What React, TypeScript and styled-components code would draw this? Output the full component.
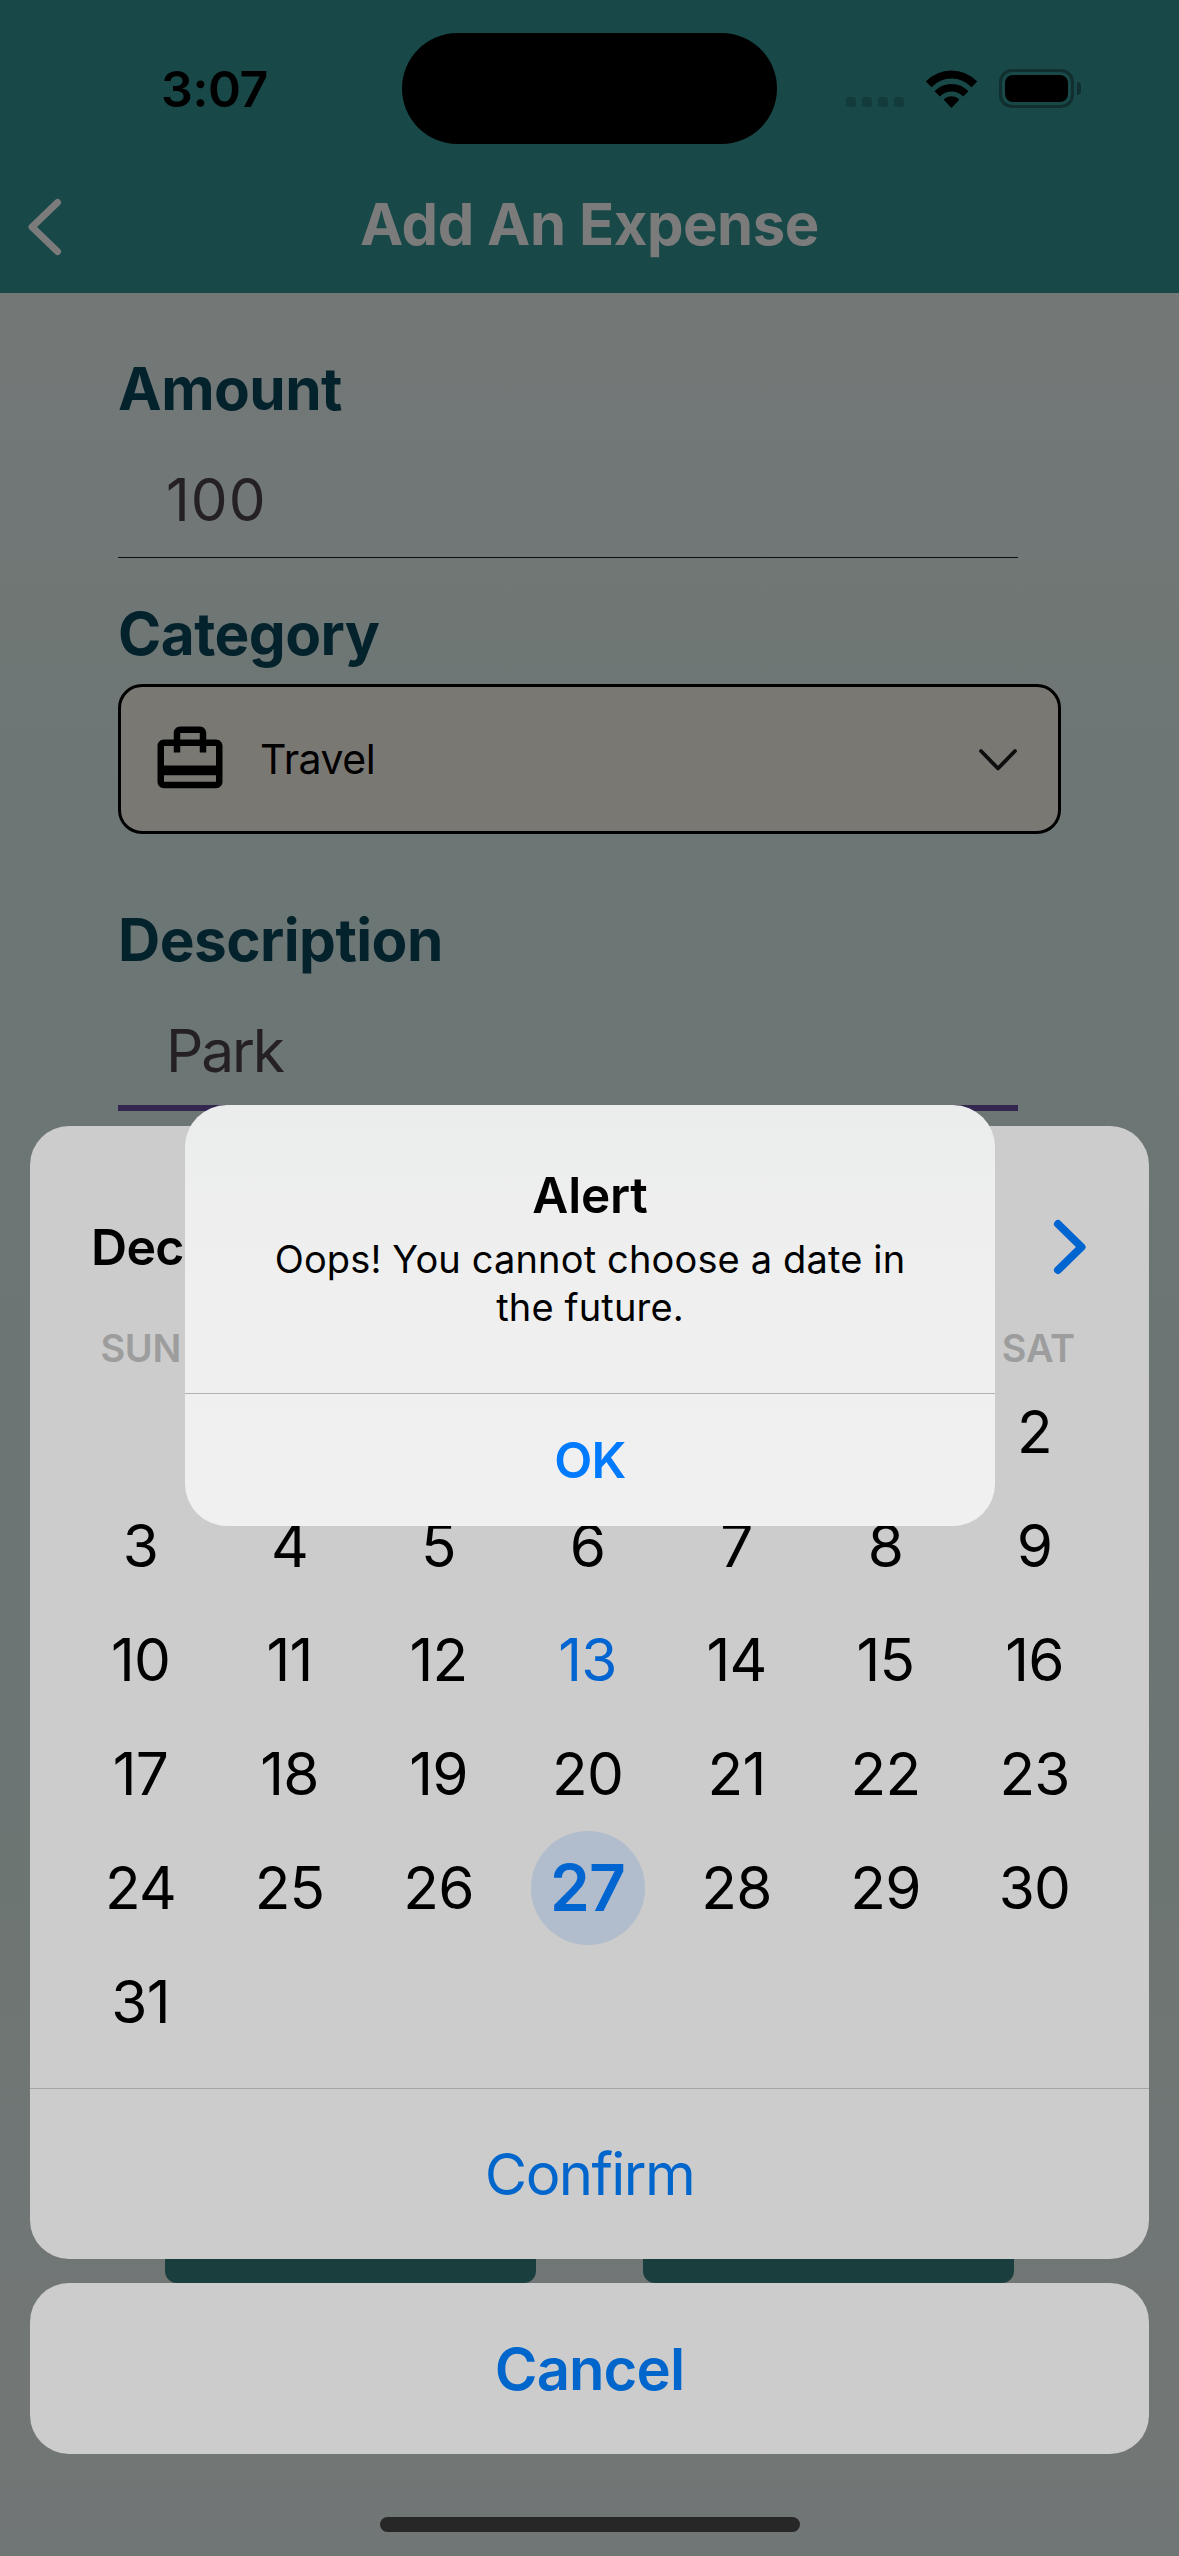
import React from "react";
import styled, { createGlobalStyle } from "styled-components";
import { MdOutlineCardTravel } from "react-icons/md";

const GlobalStyle = createGlobalStyle`
  * { box-sizing: border-box; }
  html, body { margin: 0; padding: 0; }
  body { font-family: Inter, "Liberation Sans", sans-serif; }
  button { font: inherit; border: 0; padding: 0; margin: 0; background: none; }
`;

const Screen = styled.main`
  position: relative;
  display: flex;
  flex-direction: column;
  width: 1179px;
  height: 2556px;
  overflow: hidden;
  background: linear-gradient(#737877 0%, #737877 12%, #6c7674 34%, #6c7573 68%, #727776 94%, #707675 100%);
`;

const Header = styled.header`
  display: flex;
  flex-direction: column;
  height: 293px;
  flex: none;
  background: #184847;
`;

const StatusBar = styled.div`
  display: grid;
  grid-template-columns: 402px 375px 402px;
  align-items: center;
  height: 177px;
`;

const Clock = styled.time`
  padding-left: 161px;
  font-size: 50px;
  font-weight: 600;
  line-height: 60px;
  letter-spacing: -0.4px;
  color: #000;
`;

const Island = styled.div`
  height: 111px;
  border-radius: 56px;
  background: #000;
`;

const StatusIcons = styled.div`
  display: flex;
  align-items: center;
  height: 39px;
  padding-left: 69px;
`;

const Signal = styled.div`
  display: flex;
  align-self: flex-end;
  gap: 6px;
  margin: 0 22px 1px 0;
`;

const SignalDot = styled.span`
  width: 10px;
  height: 10px;
  border-radius: 3.5px;
  background: #143b3b;
`;

const Battery = styled.div`
  display: flex;
  width: 75px;
  height: 39px;
  padding: 3px;
  margin-left: 22px;
  border: 3px solid #112f2f;
  border-radius: 13px;
`;

const BatteryLevel = styled.span`
  flex: 1;
  border-radius: 8px;
  background: #000;
`;

const BatteryTip = styled.span`
  width: 4px;
  height: 13px;
  margin-left: 3px;
  border-radius: 0 4px 4px 0;
  background: #112f2f;
`;

const NavBar = styled.div`
  display: grid;
  grid-template-columns: 120px 1fr 120px;
  align-items: center;
  height: 94px;
`;

const BackButton = styled.button`
  display: flex;
  padding: 6px 0 0 27px;
`;

const Title = styled.h1`
  margin: 0;
  text-align: center;
  font-size: 58px;
  font-weight: 700;
  line-height: 94px;
  letter-spacing: -0.45px;
  color: #7b7b7b;
`;

const Form = styled.section`
  display: flex;
  flex-direction: column;
  height: 1990px;
  padding: 60px 118px 0;
`;

const Label = styled.h2<{ $gap: number }>`
  margin: ${(p) => p.$gap}px 0 0;
  font-size: 58.5px;
  font-weight: 700;
  line-height: 71px;
  letter-spacing: -0.55px;
  color: #04222c;
`;

const Field = styled.div<{ $focused?: boolean; $numeric?: boolean }>`
  width: 900px;
  height: ${(p) => (p.$focused ? 136 : 134)}px;
  padding: 36px 0 0 48px;
  border-bottom: ${(p) => (p.$focused ? "6px solid #33264f" : "1px solid #0d0e10")};
  font-size: 58.5px;
  line-height: 79px;
  letter-spacing: ${(p) => (p.$numeric ? 1 : -2.1)}px;
  color: #242024;
`;

const Select = styled.div`
  display: flex;
  align-items: center;
  width: 943px;
  height: 150px;
  margin-top: 15px;
  padding: 0 39px 0 30px;
  border: 3px solid #000;
  border-radius: 24px;
  background: #7a7873;
  color: #000;
`;

const SelectText = styled.span`
  flex: 1;
  padding-left: 31px;
  font-size: 41px;
  letter-spacing: -0.5px;
`;

const Actions = styled.div`
  display: flex;
  justify-content: space-between;
  margin-top: auto;
  padding: 0 47px;
`;

const ActionButton = styled.button`
  width: 371px;
  height: 120px;
  border-radius: 12px;
  background: #1a3e3e;
`;

const SheetLayer = styled.div`
  position: absolute;
  inset: 0;
  display: flex;
  flex-direction: column;
  justify-content: flex-end;
  gap: 24px;
  padding: 0 30px 102px;
`;

const Sheet = styled.section`
  display: flex;
  flex-direction: column;
  height: 1133px;
  border-radius: 39px;
  background: #ccc;
`;

const MonthBar = styled.div`
  display: flex;
  align-items: center;
  justify-content: space-between;
  height: 80px;
  margin-top: 81px;
  padding: 0 60px 0 61px;
`;

const Month = styled.h3`
  margin: 0;
  font-size: 50px;
  font-weight: 600;
  letter-spacing: -0.7px;
  color: #000;
`;

const MonthArrows = styled.div`
  display: flex;
  gap: 80px;
`;

const Weekdays = styled.div`
  display: grid;
  grid-template-columns: repeat(7, 149.6px);
  justify-content: center;
  height: 55px;
  margin-top: 33px;
`;

const Weekday = styled.span`
  text-align: center;
  font-size: 38px;
  font-weight: 600;
  line-height: 56px;
  letter-spacing: -0.3px;
  color: #9d9d9d;
`;

const Calendar = styled.div`
  display: grid;
  grid-template-columns: repeat(7, 149px);
  grid-template-rows: repeat(6, 114px);
  justify-content: center;
  padding: 0 4px 29px 0;
`;

const Day = styled.button<{ $today?: boolean; $selected?: boolean; $start?: number }>`
  width: 114px;
  height: 114px;
  justify-self: center;
  border-radius: 50%;
  ${(p) => p.$start && `grid-column: ${p.$start};`}
  background: ${(p) => (p.$selected ? "#b1bdcc" : "transparent")};
  color: ${(p) => (p.$selected || p.$today ? "#0064d1" : "#000")};
  font-size: ${(p) => (p.$selected ? 64 : 58.5)}px;
  font-weight: ${(p) => (p.$selected ? 600 : 400)};
  line-height: 114px;
  letter-spacing: -0.8px;
  white-space: nowrap;
`;

const SheetButton = styled.button<{ $strong?: boolean; $divided?: boolean }>`
  height: 171px;
  border-radius: ${(p) => (p.$divided ? "0" : "39px")};
  border-top: ${(p) => (p.$divided ? "1px solid #a5a5a7" : "0")};
  background: ${(p) => (p.$divided ? "transparent" : "#ccc")};
  color: #0066cc;
  font-size: 58px;
  font-weight: ${(p) => (p.$strong ? 600 : 400)};
  letter-spacing: ${(p) => (p.$strong ? -0.9 : -1.6)}px;
`;

const AlertLayer = styled.div`
  position: absolute;
  inset: 0;
  display: flex;
  align-items: center;
  justify-content: center;
  padding: 75px 0 0 1px;
`;

const AlertBox = styled.div`
  display: flex;
  flex-direction: column;
  width: 810px;
  height: 421px;
  border-radius: 42px;
  background: linear-gradient(#ebedec, #efefef 45%, #f0f0f0);
  color: #000;
  text-align: center;
`;

const AlertTitle = styled.h4`
  margin: 60px 0 0;
  font-size: 49.5px;
  font-weight: 600;
  line-height: 60px;
  letter-spacing: -0.2px;
`;

const AlertMessage = styled.p`
  flex: 1;
  margin: 10px 70px 0;
  font-size: 38px;
  line-height: 48px;
  letter-spacing: 0.15px;
`;

const AlertButton = styled.button`
  height: 133px;
  border-top: 1px solid #b0b3b3;
  color: #007aff;
  font-size: 49.5px;
  font-weight: 600;
  letter-spacing: -0.6px;
`;

const HomeIndicator = styled.div`
  position: absolute;
  left: 380px;
  bottom: 24px;
  width: 420px;
  height: 15px;
  border-radius: 8px;
  background: #272727;
`;

const WEEKDAYS = ["SUN", "MON", "TUE", "WED", "THU", "FRI", "SAT"];
const DAYS = Array.from({ length: 31 }, (_, i) => i + 1);
const FIRST_COLUMN = 6;
const TODAY = 13;
const SELECTED = 27;

const WifiIcon = () => (
  <svg width="51" height="38" viewBox="0 0 51 38" fill="none" stroke="#000">
    <path d="M2.6 14.4C15.5 1.2 35.5 1.2 48.4 14.4" strokeWidth="8" />
    <path d="M11.2 23.9C19.3 15.7 31.7 15.7 39.8 23.9" strokeWidth="7.6" />
    <path d="M25.5 38L18 30C17.6 29.4 20.6 26.3 25.5 26.3S33.4 29.4 33 30Z" fill="#000" stroke="none" />
  </svg>
);

const BackIcon = () => (
  <svg width="38" height="60" viewBox="0 0 38 60" fill="none" stroke="#7b7b7b" strokeWidth="7" strokeLinecap="round" strokeLinejoin="round">
    <path d="M30.5 5.5L5 30L30.5 54.5" />
  </svg>
);

const NextIcon = () => (
  <svg width="37" height="58" viewBox="0 0 37 58" fill="none" stroke="#0064d1" strokeWidth="8" strokeLinecap="round" strokeLinejoin="round">
    <path d="M6 6L29.5 29L6 52" />
  </svg>
);

const PrevIcon = () => (
  <svg width="37" height="58" viewBox="0 0 37 58" fill="none" stroke="#0064d1" strokeWidth="8" strokeLinecap="round" strokeLinejoin="round">
    <path d="M31 6L7.5 29L31 52" />
  </svg>
);

const ChevronDown = () => (
  <svg width="42" height="24" viewBox="0 0 42 24" fill="none" stroke="#0e0e0e" strokeWidth="3.8" strokeLinecap="round" strokeLinejoin="round">
    <path d="M4 4L21 21.5L38 4" />
  </svg>
);

export default function App() {
  return (
    <Screen>
      <GlobalStyle />
      <Header>
        <StatusBar>
          <Clock>3:07</Clock>
          <Island />
          <StatusIcons>
            <Signal>
              <SignalDot />
              <SignalDot />
              <SignalDot />
              <SignalDot />
            </Signal>
            <WifiIcon />
            <Battery>
              <BatteryLevel />
            </Battery>
            <BatteryTip />
          </StatusIcons>
        </StatusBar>
        <NavBar>
          <BackButton aria-label="Back">
            <BackIcon />
          </BackButton>
          <Title>Add An Expense</Title>
        </NavBar>
      </Header>

      <Form>
        <Label $gap={0}>Amount</Label>
        <Field $numeric>100</Field>
        <Label $gap={40}>Category</Label>
        <Select>
          <MdOutlineCardTravel size={78} />
          <SelectText>Travel</SelectText>
          <ChevronDown />
        </Select>
        <Label $gap={70}>Description</Label>
        <Field $focused>Park</Field>
        <Actions>
          <ActionButton />
          <ActionButton />
        </Actions>
      </Form>

      <SheetLayer>
        <Sheet>
          <MonthBar>
            <Month>Dec</Month>
            <MonthArrows>
              <PrevIcon />
              <NextIcon />
            </MonthArrows>
          </MonthBar>
          <Weekdays>
            {WEEKDAYS.map((name) => (
              <Weekday key={name}>{name}</Weekday>
            ))}
          </Weekdays>
          <Calendar>
            {DAYS.map((day) => (
              <Day
                key={day}
                $start={day === 1 ? FIRST_COLUMN : undefined}
                $today={day === TODAY}
                $selected={day === SELECTED}
              >
                {day}
              </Day>
            ))}
          </Calendar>
          <SheetButton $divided>Confirm</SheetButton>
        </Sheet>
        <SheetButton $strong>Cancel</SheetButton>
      </SheetLayer>

      <AlertLayer>
        <AlertBox role="alertdialog">
          <AlertTitle>Alert</AlertTitle>
          <AlertMessage>
            Oops! You cannot choose a date in
            <br />
            the future.
          </AlertMessage>
          <AlertButton>OK</AlertButton>
        </AlertBox>
      </AlertLayer>
      <HomeIndicator />
    </Screen>
  );
}
